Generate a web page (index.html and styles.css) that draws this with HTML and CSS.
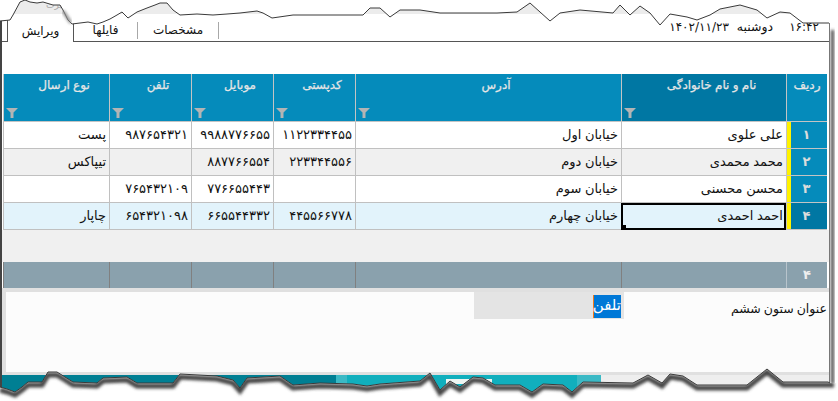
FILE: index.html
```html
<!DOCTYPE html>
<html lang="fa">
<head>
<meta charset="utf-8">
<title>ویرایش</title>
<link rel="stylesheet" href="styles.css">
</head>
<body>
<div class="screen">
  <div class="window">
    <div class="topbar">
      <div class="tabs">
        <div class="tab active">ویرایش</div>
        <div class="tab t2">فایلها</div>
        <div class="tab t3">مشخصات</div>
      </div>
      <div class="clock">
        <span>۱۴۰۲/۱۱/۲۳</span>
        <span class="day">دوشنبه</span>
        <span class="time">۱۶:۴۲</span>
      </div>
    </div>
    <div class="gap"></div>
    <div class="grid" dir="rtl">
      <div class="hd hd-row"><span>ردیف</span></div>
      <div class="hd hd-on"><span>نام و نام خانوادگی</span><svg class="funnel" viewBox="0 0 12 10"><path d="M0 0H12L7.5 4.6V10H4.500V4.600Z"/></svg></div>
      <div class="hd"><span>آدرس</span><svg class="funnel" viewBox="0 0 12 10"><path d="M0 0H12L7.5 4.6V10H4.500V4.600Z"/></svg></div>
      <div class="hd"><span>کدپستی</span><svg class="funnel" viewBox="0 0 12 10"><path d="M0 0H12L7.5 4.6V10H4.500V4.600Z"/></svg></div>
      <div class="hd"><span>موبایل</span><svg class="funnel" viewBox="0 0 12 10"><path d="M0 0H12L7.5 4.6V10H4.500V4.600Z"/></svg></div>
      <div class="hd"><span>تلفن</span><svg class="funnel" viewBox="0 0 12 10"><path d="M0 0H12L7.5 4.6V10H4.500V4.600Z"/></svg></div>
      <div class="hd"><span>نوع ارسال</span><svg class="funnel" viewBox="0 0 12 10"><path d="M0 0H12L7.5 4.6V10H4.500V4.600Z"/></svg></div>

      <div class="rh">۱</div>
      <div class="c">علی علوی</div><div class="c">خیابان اول</div><div class="c n">۱۱۲۲۳۳۴۴۵۵</div><div class="c n">۹۹۸۸۷۷۶۶۵۵</div><div class="c n">۹۸۷۶۵۴۳۲۱</div><div class="c">پست</div>

      <div class="rh">۲</div>
      <div class="c alt">محمد محمدی</div><div class="c alt">خیابان دوم</div><div class="c alt n">۲۲۳۳۴۴۵۵۶</div><div class="c alt n">۸۸۷۷۶۶۵۵۴</div><div class="c alt n"></div><div class="c alt">تیپاکس</div>

      <div class="rh">۳</div>
      <div class="c">محسن محسنی</div><div class="c">خیابان سوم</div><div class="c n"></div><div class="c n">۷۷۶۶۵۵۴۴۳</div><div class="c n">۷۶۵۴۳۲۱۰۹</div><div class="c"></div>

      <div class="rh rh-on">۴</div>
      <div class="c sel cur">احمد احمدی<i class="handle"></i></div><div class="c sel">خیابان چهارم</div><div class="c sel n">۴۴۵۵۶۶۷۷۸</div><div class="c sel n">۶۶۵۵۴۴۳۳۲</div><div class="c sel n">۶۵۴۳۲۱۰۹۸</div><div class="c sel">چاپار</div>
    </div>
    <div class="blank"></div>
    <div class="footer" dir="rtl">
      <div class="f f-count">۴</div><div class="f"></div><div class="f"></div><div class="f"></div><div class="f"></div><div class="f"></div><div class="f"></div>
    </div>
    <div class="form-wrap">
      <div class="form" dir="rtl">
        <label class="lbl">عنوان ستون ششم</label>
        <div class="input"><span class="picked">تلفن</span></div>
      </div>
    </div>
    <div class="strip"><div class="s1"></div><div class="s2"></div><div class="s3"></div></div>
  </div>

  <svg class="tear" viewBox="0 0 838 401" aria-hidden="true">
    <defs>
      <filter id="blur" x="-5%" y="-20%" width="110%" height="140%"><feGaussianBlur stdDeviation="1.5"/></filter>
      <clipPath id="below"><path d="M0 387L7 389 15 392 22 387 28 382 42 382 48 372 57 372 65 377 73 382 97 383 103 378 127 377 137 383 173 383 180 374 217 376 233 380 240 388 247 378 280 376 293 385 320 383 353 384 367 386 380 384 420 381 430 373 440 390 450 381 460 387 473 377 483 378 495 385 520 385 532 392 543 384 563 385 572 392 583 382 633 383 648 375 662 383 670 374 683 376 697 385 747 385 767 369 783 382 828 382 830 383 838 383V401H0Z"/></clipPath>
    </defs>
    <rect class="band" x="0" y="0" width="829" height="14"/>
    <text class="ghost" x="62" y="8" direction="rtl">برت</text>
    <rect class="rbox" x="446" y="379" width="46" height="5"/>
    <path class="white" d="M0 0V21L10 20 13 15 20 2 25 0 30 2 37 3 43 2 53 5 60 5 63 10 68 20 72 24 80 23 88 22 97 24 103 22 110 19 117 15 122 12 128 18 137 12 147 8 155 5 160 3 167 3 173 10 180 15 197 14 213 15 227 14 240 13 257 11 263 13 272 18 293 15 317 15 350 15 363 15 370 8 380 8 390 17 400 10 420 10 440 13 470 13 483 13 497 13 517 12 530 3 540 12 550 21 560 13 580 10 613 13 620 5 630 15 640 6 650 13 660 25 670 14 687 17 697 20 710 15 720 9 740 5 757 10 767 18 780 12 790 13 803 23 829 23 838 23V0Z"/>
    <path class="line" d="M0 21L10 20 13 15 20 2 25 0 30 2 37 3 43 2 53 5 60 5 63 10 68 20 72 24 80 23 88 22 97 24 103 22 110 19 117 15 122 12 128 18 137 12 147 8 155 5 160 3 167 3 173 10 180 15 197 14 213 15 227 14 240 13 257 11 263 13 272 18 293 15 317 15 350 15 363 15 370 8 380 8 390 17 400 10 420 10 440 13 470 13 483 13 497 13 517 12 530 3 540 12 550 21 560 13 580 10 613 13 620 5 630 15 640 6 650 13 660 25 670 14 687 17 697 20 710 15 720 9 740 5 757 10 767 18 780 12 790 13 803 23 829 23"/>
    <path class="spot" d="M63 11L71 23"/>
    <rect class="white" x="830" y="23" width="8" height="360"/>
    <rect class="rshadow" x="831" y="30" width="3" height="354"/>
    <path class="white" d="M0 387L7 389 15 392 22 387 28 382 42 382 48 372 57 372 65 377 73 382 97 383 103 378 127 377 137 383 173 383 180 374 217 376 233 380 240 388 247 378 280 376 293 385 320 383 353 384 367 386 380 384 420 381 430 373 440 390 450 381 460 387 473 377 483 378 495 385 520 385 532 392 543 384 563 385 572 392 583 382 633 383 648 375 662 383 670 374 683 376 697 385 747 385 767 369 783 382 828 382 830 383 838 383V401H0Z"/>
    <g clip-path="url(#below)">
      <path class="bshadow" d="M0 390L7 392 15 395 22 390 28 385 42 385 48 375 57 375 65 380 73 385 97 386 103 381 127 380 137 386 173 386 180 377 217 379 233 383 240 391 247 381 280 379 293 388 320 386 353 387 367 389 380 387 420 384 430 376 440 393 450 384 460 390 473 380 483 381 495 388 520 388 532 395 543 387 563 388 572 395 583 385 633 386 648 378 662 386 670 377 683 379 697 388 747 388 767 372 783 385 834 385"/>
    </g>
    <path class="line" d="M0 387L7 389 15 392 22 387 28 382 42 382 48 372 57 372 65 377 73 382 97 383 103 378 127 377 137 383 173 383 180 374 217 376 233 380 240 388 247 378 280 376 293 385 320 383 353 384 367 386 380 384 420 381 430 373 440 390 450 381 460 387 473 377 483 378 495 385 520 385 532 392 543 384 563 385 572 392 583 382 633 383 648 375 662 383 670 374 683 376 697 385 747 385 767 369 783 382 828 382 830 383"/>
  </svg>
</div>
</body>
</html>
```
FILE: styles.css
```css
* { box-sizing: border-box; }
html, body { margin: 0; padding: 0; background: #fff; }
body { width: 838px; height: 401px; overflow: hidden; font-family: "DejaVu Sans", Tahoma, sans-serif; font-size: 12px; color: #111; }
.screen { position: relative; width: 838px; height: 401px; }
.window { width: 830px; height: 401px; border-left: 2px solid #444; border-right: 1px solid #777; background: #fff; display: flex; flex-direction: column; }

.tear { position: absolute; left: 0; top: 0; width: 838px; height: 401px; pointer-events: none; }
.band { fill: #ececec; }
.ghost { font-size: 9px; fill: #aaa; }
.rbox { fill: #eef5f2; }
.white { fill: #fff; }
.line { fill: none; stroke: #3a3a3a; stroke-width: 1; }
.spot { fill: none; stroke: #8a8a8a; stroke-width: 3; filter: url(#blur); }
.rshadow { fill: #444; filter: url(#blur); }
.bshadow { fill: none; stroke: #444; stroke-width: 5; filter: url(#blur); }

.topbar { height: 42px; display: flex; justify-content: space-between; align-items: flex-end; border-bottom: 1px solid #555; }
.tabs { display: flex; margin-left: 5px; align-items: flex-end; }
.tab { text-align: center; }
.tab.active { width: 67px; height: 22px; line-height: 22px; background: #fff; border-left: 1px solid #555; border-right: 1px solid #555; margin-bottom: -1px; }
.t2, .t3 { height: 17px; line-height: 17px; margin-bottom: 2px; border-right: 1px solid #a8a8a8; }
.t2 { width: 64px; }
.t3 { width: 81px; }
.clock { display: flex; padding: 0 10px 6px 0; font-size: 12px; line-height: 16px; }
.day { font-size: 12.5px; margin: 0 16px 0 8px; }

.gap { height: 32px; }
.grid { display: grid; margin-left: 1px; width: 824px; grid-template-columns: 41px 165px 266px 82px 82px 82px 106px; grid-template-rows: 48px repeat(4, 27px); }
.hd { background: #058bbb; color: #e6e6e6; font-size: 12px; -webkit-text-stroke: 0.25px #e6e6e6; word-spacing: -0.5px; border-left: 1px solid #c4c4c4; border-bottom: 1px solid #c4c4c4; position: relative; text-align: center; padding: 4px 0 0 15px; }
.hd-row { padding-left: 0; }
.hd-on { background: #0077a3; }
.funnel { position: absolute; left: 2px; bottom: 3px; width: 12px; height: 10px; fill: #b4b4b4; }
.rh { background: #058bbb; color: #dcdcdc; font-weight: bold; font-size: 13px; text-align: center; line-height: 26px; border-bottom: 1px solid #c4c4c4; box-shadow: inset 1px 0 #c4c4c4, inset 5px 0 #fff200; }
.rh-on { background: #0077a3; }
.c { background: #fff; font-size: 13px; border-left: 1px solid #c0c0c0; border-bottom: 1px solid #c0c0c0; line-height: 26px; padding: 0 3px; white-space: nowrap; position: relative; word-spacing: -0.5px; }
.n { letter-spacing: 0.3px; }
.alt { background: #f0f0f0; }
.sel { background: #e2f3fb; }
.cur { outline: 2px solid #000; outline-offset: -2px; }
.handle { position: absolute; left: 0; bottom: 0; width: 4px; height: 4px; background: #000; }

.blank { height: 32px; background: #f0f0f0; }
.footer { height: 26px; width: 824px; margin-left: 1px; background: #8aa1ad; display: grid; grid-template-columns: 41px 165px 266px 82px 82px 82px 106px; }
.f { border-left: 1px solid #808080; }
.f-count { color: #eee; font-weight: bold; font-size: 13px; text-align: center; line-height: 26px; border-left-color: #b8c4cc; }

.form-wrap { height: 87px; background: #e0e0e0; padding: 4px 0 3px 4px; }
.form { height: 100%; background: #fcfcfc; display: flex; align-items: flex-start; }
.lbl { width: 205px; padding: 9px 2px 0 0; font-size: 12.5px; word-spacing: -1px; }
.input { width: 150px; height: 27px; background: #e4e4e4; padding: 3px 3px 0 0; }
.picked { display: inline-block; height: 23px; width: 28px; background: #0078d7; color: #fff; font-size: 15px; line-height: 21px; text-align: center; border-left: 1px solid #f27a1a; }

.strip { flex: 1; display: flex; }
.s1 { width: 334px; background: #007f93; }
.s2 { width: 265px; background: linear-gradient(90deg, #3bb9c5 11px, #11afbd 11px, #11afbd 241px, #3bb9c5 241px); }
.s3 { flex: 1; background: #eee; }
```
